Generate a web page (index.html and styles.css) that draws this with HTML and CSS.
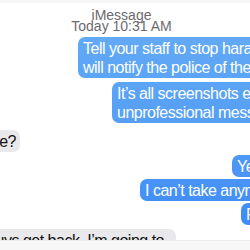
FILE: index.html
```html
<!DOCTYPE html>
<html>
<head>
<meta charset="utf-8">
<link rel="stylesheet" href="styles.css">
</head>
<body>
<div class="topbar"></div>
<div class="thread">
  <div class="meta">
    <div>iMessage</div>
    <div>Today 10:31 AM</div>
  </div>
  <div class="msg out b1">Tell your staff to stop harassing me or I<br>will notify the police of their behavior.</div>
  <div class="msg out b2">It’s all screenshots every single<br>unprofessional message.</div>
  <div class="in-row r1"><div class="msg in">Are you sure?</div></div>
  <div class="msg out b3">Yes</div>
  <div class="msg out b4">I can’t take anymore of this.</div>
  <div class="msg out b5">Please</div>
  <div class="in-row r2"><div class="msg in">When the guys get back. I’m going to<br>talk to them about it.</div></div>
</div>
<div class="composer"></div>
</body>
</html>
```
FILE: styles.css
```css
html, body {
  margin: 0;
  padding: 0;
  width: 250px;
  height: 250px;
  overflow: hidden;
  background: #fff;
  font-family: "Liberation Sans", Arial, sans-serif;
}
body {
  position: relative;
}
.topbar {
  height: 3px;
  background: #f6f6f6;
}
.thread {
  display: flex;
  flex-direction: column;
  align-items: flex-start;
}
.meta {
  align-self: stretch;
  text-align: center;
  padding: 7px 7px 0 0;
  font-size: 14px;
  line-height: 11px;
  color: #6b6b6f;
  margin-bottom: 5px;
}
.msg {
  white-space: nowrap;
  font-size: 16px;
  letter-spacing: -0.5px;
  line-height: 19px;
  padding: 2px 6px 1px 5px;
  border-radius: 7px;
}
.out {
  color: #fff;
  background: linear-gradient(180deg, #68aef6 0px, #559ff5 120px, #3a86f6 250px);
  background-attachment: fixed;
}
.in {
  color: #111;
  background: #e9e9eb;
}
.in-row {
  display: flex;
  justify-content: flex-end;
}
.b1 { margin-left: 78px; }
.b2 { margin-left: 112px; margin-top: 4px; }
.r1 { width: 20px; margin-top: 7px; }
.r1 .msg { padding-right: 4px; }
.b3 { margin-left: 232px; margin-top: 3px; }
.b4 { margin-left: 140px; margin-top: 2px; }
.b5 { margin-left: 241px; margin-top: 2px; }
.r2 { width: 176px; margin-top: 4px; }
.r2 .msg { padding-right: 12px; }
.composer {
  position: absolute;
  left: 0;
  right: 0;
  bottom: 0;
  height: 9px;
  background: #f7f7f7;
  border-top: 1px solid #ececec;
}
```
